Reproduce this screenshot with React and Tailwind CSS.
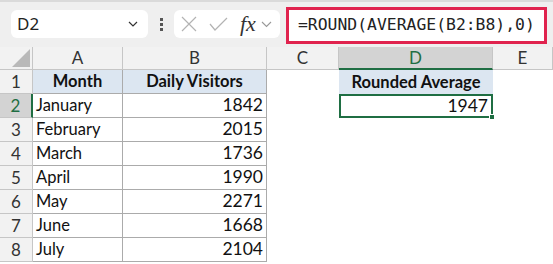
import React from 'react';

const cols = ['A', 'B', 'C', 'D', 'E'];

const rows = [
  ['January', 1842],
  ['February', 2015],
  ['March', 1736],
  ['April', 1990],
  ['May', 2271],
  ['June', 1668],
  ['July', 2104],
];

const App = () => {
  return (
    <div className="w-[553px] h-[264px] overflow-hidden bg-white font-['Lato',sans-serif] text-[16.5px] text-[#111]">
      {/* Toolbar */}
      <div className="h-[47px] bg-[#efefef] border-t-2 border-[#dadada] flex items-start">
        {/* Name box */}
        <div className="ml-[11px] mt-[8px] w-[137px] h-[28px] bg-white rounded-md flex items-center pl-[6px] pr-[10px]">
          <span className="flex-1 font-['Noto_Sans',sans-serif] text-[17px] text-[#222]">D2</span>
          <svg width="10" height="6" viewBox="0 0 10 6" fill="none" stroke="#333" strokeWidth="1.2">
            <path d="M1 1l4 4 4-4" />
          </svg>
        </div>
        {/* Dots */}
        <div className="ml-[12px] mt-[16px] flex flex-col gap-[2px]">
          <span className="w-[3px] h-[3px] bg-[#555]" />
          <span className="w-[3px] h-[3px] bg-[#555]" />
          <span className="w-[3px] h-[3px] bg-[#555]" />
        </div>
        {/* Formula buttons */}
        <div className="ml-[11px] mt-[8px] w-[106px] h-[28px] bg-white rounded-md flex items-center pl-[7px]">
          <svg width="16" height="16" viewBox="0 0 16 16" fill="none" stroke="#b3b3b3" strokeWidth="1.2">
            <path d="M1 1l14 14M15 1L1 15" />
          </svg>
          <svg className="ml-[12px]" width="19" height="14" viewBox="0 0 19 14" fill="none" stroke="#b3b3b3" strokeWidth="1.2">
            <path d="M1 7l5 6L18 1" />
          </svg>
          <span className="ml-[12px] font-['Liberation_Serif',serif] italic text-[22px] text-[#333] leading-none">fx</span>
          <svg className="ml-[5px]" width="11" height="7" viewBox="0 0 11 7" fill="none" stroke="#999" strokeWidth="1.1">
            <path d="M1 1l4.5 4.5L10 1" />
          </svg>
        </div>
        {/* Formula */}
        <div className="ml-[6px] mt-[5px] w-[261px] h-[37px] bg-white border-[3px] border-[#e0234e] flex items-center pl-[9px]">
          <span className="font-['DejaVu_Sans_Mono',monospace] text-[16.4px] text-[#222]">=ROUND(AVERAGE(B2:B8),0)</span>
        </div>
      </div>

      {/* Grid */}
      <div className="grid grid-cols-[33px_90px_144px_72px_154px_1fr] grid-rows-[23px_repeat(8,24px)]">
        {/* Header row */}
        <div className="bg-[#f2f2f2] border-r border-b border-[#c6c6c6] flex items-end justify-end pr-[2px] pb-[2px]">
          <svg width="18" height="18" viewBox="0 0 18 18">
            <path d="M18 0V18H0Z" fill="#b9b9b9" />
          </svg>
        </div>
        {cols.map((c) =>
          c === 'D' ? (
            <div key={c} className="bg-[#d3d3d3] border-r border-[#c6c6c6] border-b-2 border-b-[#1f6e43] flex items-center justify-center text-[17px] text-[#1f6e43]">
              {c}
            </div>
          ) : (
            <div key={c} className="bg-[#f2f2f2] border-r border-b border-[#c6c6c6] flex items-center justify-center text-[17px] text-[#333]">
              {c}
            </div>
          )
        )}

        {/* Row 1 */}
        <div className="bg-[#f2f2f2] border-r border-b border-[#c6c6c6] flex items-center justify-center text-[17px] text-[#333]">1</div>
        <div className="bg-[#dce6f1] border-r border-b border-[#ababab] flex items-center justify-center font-bold">Month</div>
        <div className="bg-[#dce6f1] border-r border-b border-[#ababab] flex items-center justify-center font-bold">Daily Visitors</div>
        <div />
        <div className="bg-[#dce6f1] flex items-center justify-center font-bold">Rounded Average</div>
        <div />

        {rows.map(([m, v], i) => {
          const n = i + 2;
          const sel = n === 2;
          return (
            <React.Fragment key={m}>
              <div
                className={
                  sel
                    ? 'bg-[#d3d3d3] border-b border-[#c6c6c6] border-r-2 border-r-[#1f6e43] flex items-center justify-center text-[17px] text-[#1f6e43]'
                    : 'bg-[#f2f2f2] border-r border-b border-[#c6c6c6] flex items-center justify-center text-[17px] text-[#333]'
                }
              >
                {n}
              </div>
              <div className="border-r border-b border-[#ababab] flex items-center pl-[3px]">{m}</div>
              <div className="border-r border-b border-[#ababab] flex items-center justify-end pr-[3px] text-[17.5px]">{v}</div>
              <div />
              {sel ? (
                <div className="relative border-2 border-[#1f6e43] flex items-center justify-end pr-[3px] text-[17.5px]">
                  1947
                  <span className="absolute right-[-4px] bottom-[-4px] w-[6px] h-[6px] bg-[#1f6e43] border border-white" />
                </div>
              ) : (
                <div />
              )}
              <div />
            </React.Fragment>
          );
        })}
      </div>
    </div>
  );
};

export default App;
